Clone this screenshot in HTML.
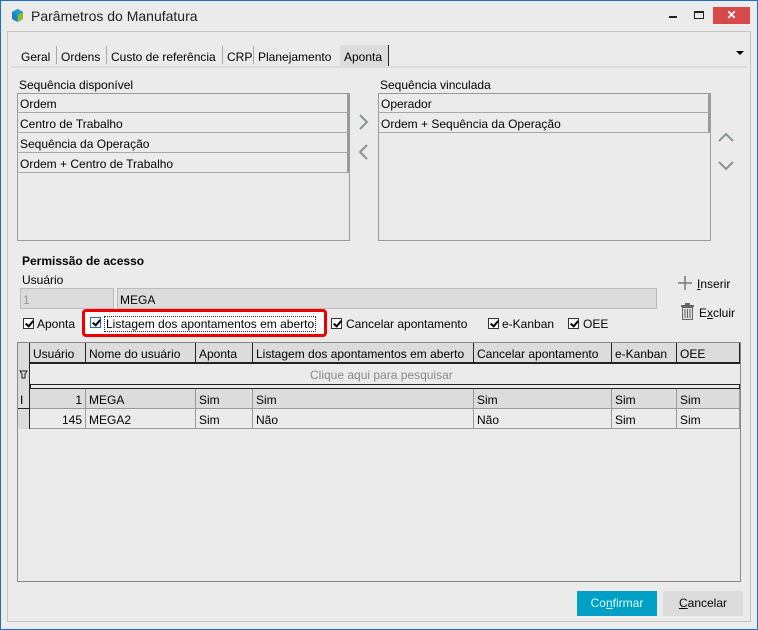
<!DOCTYPE html>
<html><head><meta charset="utf-8"><style>
*{margin:0;padding:0;box-sizing:border-box}
body{width:758px;height:630px;background:#ebebeb;font-family:"Liberation Sans",sans-serif;font-size:12px;color:#000;position:relative;overflow:hidden}
.a{position:absolute;white-space:nowrap}
.win{position:absolute;left:0;top:0;width:758px;height:630px;border:1px solid #1e6fbf}
.row{position:absolute;height:20px;border-bottom:1px solid #a8a8a8;padding:4px 0 0 3px;border-right:3px solid #9a9a9a}
.cb{position:absolute;width:11px;height:11px;border:1px solid #333;background:#fff}
.cb:after{content:"";position:absolute;left:3px;top:0px;width:3px;height:6px;border:solid #000;border-width:0 2px 2px 0;transform:rotate(40deg)}
.g{position:absolute;border-right:1px solid #222;height:20px;padding:4px 0 0 3px;border-bottom:1px solid #222}
.gr{position:absolute;border-right:1px solid #999;height:20px;padding:4px 0 0 3px;border-bottom:1px solid #999}
</style></head><body>
<div class="win"></div>
<svg class="a" style="left:11px;top:9px" width="13" height="13" viewBox="0 0 13 13"><polygon points="6.5,0 12,3 12,10 6.5,13 1,10 1,3" fill="#1b7fc4"/><polygon points="6.5,6 12,3 12,10 6.5,13" fill="#8bbd2a"/><polygon points="1,3 6.5,0 12,3 6.5,6" fill="#1d9bd5"/></svg>
<div class="a" style="left:31px;top:8px;font-size:14px;color:#222">Parâmetros do Manufatura</div>
<div class="a" style="left:669px;top:16px;width:8px;height:2px;background:#222"></div>
<div class="a" style="left:694px;top:11px;width:10px;height:8px;border:1px solid #222;border-top-width:2px"></div>
<div class="a" style="left:713px;top:7px;width:37px;height:17px;background:#d64a4a;color:#fff;text-align:center;font-size:12px;font-weight:bold;line-height:17px">✕</div>
<div class="a" style="left:7px;top:31px;width:744px;height:591px;border:1px solid #c4c4c4"></div>
<div class="a" style="left:11px;top:66px;width:736px;height:2px;background:#dcdcdc"></div>
<div class="a" style="left:340px;top:45px;width:49px;height:21px;background:#dcdcdc;border-right:1px solid #222"></div>
<div class="a" style="left:21px;top:50px">Geral</div>
<div class="a" style="left:56px;top:46px;width:1px;height:18px;background:#aaa"></div>
<div class="a" style="left:61px;top:50px">Ordens</div>
<div class="a" style="left:106px;top:46px;width:1px;height:18px;background:#aaa"></div>
<div class="a" style="left:111px;top:50px">Custo de referência</div>
<div class="a" style="left:222px;top:46px;width:1px;height:18px;background:#aaa"></div>
<div class="a" style="left:227px;top:50px">CRP</div>
<div class="a" style="left:253px;top:46px;width:1px;height:18px;background:#aaa"></div>
<div class="a" style="left:258px;top:50px">Planejamento</div>
<div class="a" style="left:344px;top:50px">Aponta</div>
<div class="a" style="left:736px;top:51px;width:0;height:0;border-left:4px solid transparent;border-right:4px solid transparent;border-top:4px solid #000"></div>
<div class="a" style="left:19px;top:78px">Sequência disponível</div>
<div class="a" style="left:17px;top:93px;width:333px;height:148px;border:1px solid #999"></div>
<div class="row" style="left:17px;top:93px;width:333px">Ordem</div>
<div class="row" style="left:17px;top:113px;width:333px">Centro de Trabalho</div>
<div class="row" style="left:17px;top:133px;width:333px">Sequência da Operação</div>
<div class="row" style="left:17px;top:153px;width:333px">Ordem + Centro de Trabalho</div>
<svg class="a" style="left:357px;top:113px" width="14" height="48"><path d="M3 2 L10 9 L3 16" fill="none" stroke="#8a9390" stroke-width="2"/><path d="M10 32 L3 39 L10 46" fill="none" stroke="#8a9390" stroke-width="2"/></svg>
<div class="a" style="left:380px;top:78px">Sequência vinculada</div>
<div class="a" style="left:378px;top:93px;width:333px;height:148px;border:1px solid #999"></div>
<div class="row" style="left:378px;top:93px;width:333px">Operador</div>
<div class="row" style="left:378px;top:113px;width:333px">Ordem + Sequência da Operação</div>
<svg class="a" style="left:717px;top:131px" width="18" height="42"><path d="M2 10 L9 3 L16 10" fill="none" stroke="#8a9390" stroke-width="2"/><path d="M2 31 L9 38 L16 31" fill="none" stroke="#8a9390" stroke-width="2"/></svg>
<div class="a" style="left:22px;top:254px;font-weight:bold">Permissão de acesso</div>
<div class="a" style="left:22px;top:273px">Usuário</div>
<div class="a" style="left:20px;top:288px;width:94px;height:21px;background:#dcdcdc;border:1px solid #bbb;padding:4px 0 0 2px;color:#999">1</div>
<div class="a" style="left:117px;top:288px;width:540px;height:21px;background:#dcdcdc;border:1px solid #bbb;padding:4px 0 0 2px">MEGA</div>
<svg class="a" style="left:677px;top:275px" width="16" height="16"><path d="M8 1V15M1 8H15" stroke="#777" stroke-width="1.5"/></svg>
<div class="a" style="left:697px;top:277px"><u>I</u>nserir</div>
<svg class="a" style="left:681px;top:303px" width="13" height="17"><rect x="0" y="2" width="13" height="2" fill="#666"/><rect x="4" y="0" width="5" height="2" fill="#666"/><rect x="1.5" y="4.5" width="10" height="12" fill="#ddd" stroke="#666"/><path d="M4 6V15M6.5 6V15M9 6V15" stroke="#666"/></svg>
<div class="a" style="left:699px;top:306px">E<u>x</u>cluir</div>
<div class="cb" style="left:23px;top:318px"></div><div class="a" style="left:37px;top:317px">Aponta</div>
<div class="a" style="left:82px;top:309px;width:245px;height:28px;border:3px solid #e00;border-radius:4px;background:#fff"></div>
<div class="cb" style="left:90px;top:317px;border-color:#1e6fbf"></div>
<div class="a" style="left:104px;top:316px;border:1px dotted #333;padding:0 1px;line-height:14px">Listagem dos apontamentos em aberto</div>
<div class="cb" style="left:331px;top:318px"></div><div class="a" style="left:346px;top:317px">Cancelar apontamento</div>
<div class="cb" style="left:488px;top:318px"></div><div class="a" style="left:502px;top:317px">e-Kanban</div>
<div class="cb" style="left:568px;top:318px"></div><div class="a" style="left:583px;top:317px">OEE</div>
<div class="a" style="left:17px;top:342px;width:724px;height:240px;border:1px solid #888"></div>
<div class="a" style="left:18px;top:343px;width:722px;height:21px;background:#dcdcdc;border-bottom:1px solid #222"></div>
<div class="a" style="left:18px;top:343px;width:12px;height:86px;background:#dcdcdc;border-right:1px solid #222"></div>
<div class="g" style="left:30px;top:343px;width:56px">Usuário</div>
<div class="g" style="left:86px;top:343px;width:110px">Nome do usuário</div>
<div class="g" style="left:196px;top:343px;width:57px">Aponta</div>
<div class="g" style="left:253px;top:343px;width:221px">Listagem dos apontamentos em aberto</div>
<div class="g" style="left:474px;top:343px;width:138px">Cancelar apontamento</div>
<div class="g" style="left:612px;top:343px;width:65px">e-Kanban</div>
<div class="g" style="left:677px;top:343px;width:63px">OEE</div>
<svg class="a" style="left:19px;top:370px" width="9" height="9"><path d="M1 1H8L6 4V8H3V4Z" fill="none" stroke="#222"/></svg>
<div class="a" style="left:310px;top:368px;color:#888">Clique aqui para pesquisar</div>
<div class="a" style="left:30px;top:384px;width:710px;height:5px;border:1px solid #222;background:#ebebeb"></div>
<div class="a" style="left:30px;top:389px;width:710px;height:20px;background:#dcdcdc"></div>
<div class="a" style="left:20px;top:393px">I</div>
<div class="gr" style="left:30px;top:389px;width:56px;text-align:right;padding-right:3px">1</div>
<div class="gr" style="left:86px;top:389px;width:110px">MEGA</div>
<div class="gr" style="left:196px;top:389px;width:57px">Sim</div>
<div class="gr" style="left:253px;top:389px;width:221px">Sim</div>
<div class="gr" style="left:474px;top:389px;width:138px">Sim</div>
<div class="gr" style="left:612px;top:389px;width:65px">Sim</div>
<div class="gr" style="left:677px;top:389px;width:63px">Sim</div>
<div class="gr" style="left:30px;top:409px;width:56px;text-align:right;padding-right:3px">145</div>
<div class="gr" style="left:86px;top:409px;width:110px">MEGA2</div>
<div class="gr" style="left:196px;top:409px;width:57px">Sim</div>
<div class="gr" style="left:253px;top:409px;width:221px">Não</div>
<div class="gr" style="left:474px;top:409px;width:138px">Não</div>
<div class="gr" style="left:612px;top:409px;width:65px">Sim</div>
<div class="gr" style="left:677px;top:409px;width:63px">Sim</div>
<div class="a" style="left:18px;top:408px;width:12px;height:1px;background:#222"></div>
<div class="a" style="left:577px;top:591px;width:80px;height:25px;background:#00a0c6;color:#dff;text-align:center;line-height:25px">Co<u>n</u>firmar</div>
<div class="a" style="left:663px;top:591px;width:80px;height:25px;background:#dcdcdc;text-align:center;line-height:25px"><u>C</u>ancelar</div>
</body></html>
